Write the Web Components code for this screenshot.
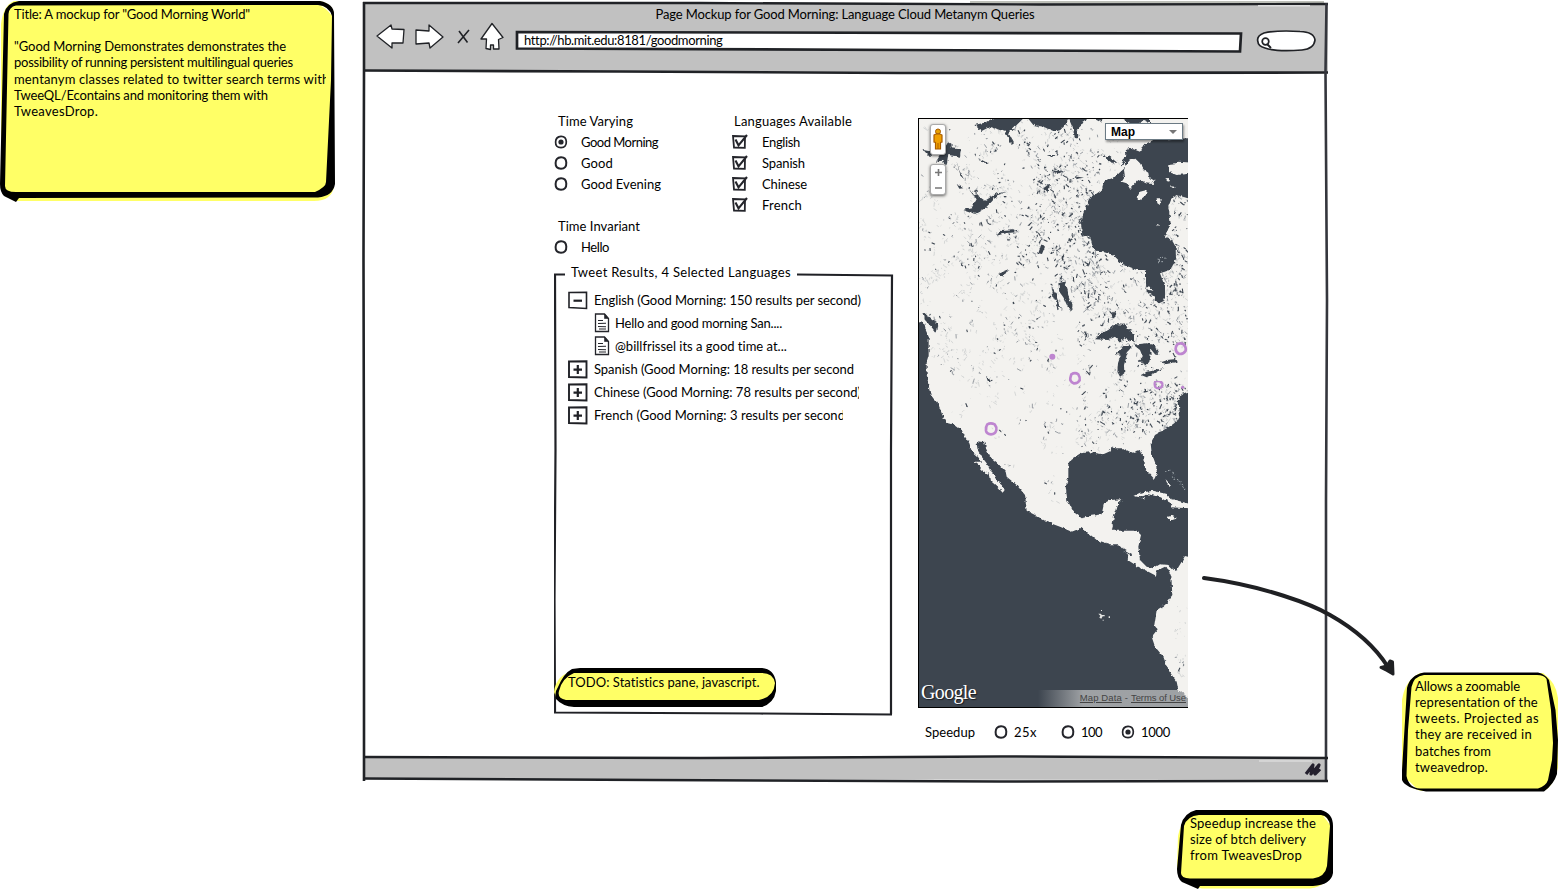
<!DOCTYPE html>
<html lang="en">
<head>
<meta charset="utf-8">
<title>Good Morning World mockup</title>
<style>
html,body{margin:0;height:100%;background:#fff;overflow:hidden}
body{font:13px/16.15px Lato,"Noto Sans",sans-serif;color:#000}
</style>
</head>
<body>
<mock-canvas>
  <browser-window style="left:362px;top:0">
    <ink-text slot="title" w="379">Page Mockup for Good Morning: Language Cloud Metanym Queries</ink-text>
    <ink-text slot="url" w="198">http://hb.mit.edu:8181/goodmorning</ink-text>
    <section-panel></section-panel>
    <map-panel></map-panel>
  </browser-window>
  <sticky-note kind="title" style="left:0;top:0;width:336px;height:203px;--pad:6px 9px 0 14px">
    <ink-text w="236">Title: A mockup for "Good Morning World"</ink-text>
    <ink-text> </ink-text>
    <ink-text w="272">"Good Morning Demonstrates demonstrates the</ink-text>
    <ink-text w="279">possibility of running persistent multilingual queries</ink-text>
    <ink-text w="315" clip="312">mentanym classes related to twitter search terms with</ink-text>
    <ink-text w="254">TweeQL/Econtains and monitoring them with</ink-text>
    <ink-text w="84">TweavesDrop.</ink-text>
  </sticky-note>
  <sticky-note kind="todo" style="left:554px;top:668px;width:224px;height:40px;--pad:6px 0 0 14px">
    <ink-text w="192">TODO: Statistics pane, javascript.</ink-text>
  </sticky-note>
  <sticky-note kind="zoom" style="left:1400px;top:670px;width:158px;height:123px;--pad:8px 0 0 15px">
    <ink-text w="105">Allows a zoomable</ink-text>
    <ink-text w="123">representation of the</ink-text>
    <ink-text w="124">tweets. Projected as</ink-text>
    <ink-text w="117">they are received in</ink-text>
    <ink-text w="76">batches from</ink-text>
    <ink-text w="73">tweavedrop.</ink-text>
  </sticky-note>
  <sticky-note kind="speed" style="left:1176px;top:808px;width:158px;height:81px;--pad:7px 0 0 14px">
    <ink-text w="126">Speedup increase the</ink-text>
    <ink-text w="116">size of btch delivery</ink-text>
    <ink-text w="112">from TweavesDrop</ink-text>
  </sticky-note>
  <ink-arrow style="left:1195px;top:570px"></ink-arrow>
</mock-canvas>

<script>
const make = (name, html) => customElements.define(name, class extends HTMLElement {
  constructor(){
    super();
    this.attachShadow({mode:'open'}).innerHTML = html instanceof Function ? html(this) : html;
  }
});

make('mock-canvas', `<style>:host{display:block;position:relative;width:1558px;height:889px;overflow:hidden}</style><slot></slot>`);

/* Sticky notes: a yellow blob under an uneven marker outline */
const notes = {
  title:`<path fill="#ff6" d="M14 1H320Q334 4 334 16V186Q332 201 314 201H16Q1 196 1 186V24Q3 6 14 1Z"/>
    <path fill="#fff" d="M318 5Q331 7 332 16Q326 7 318 5Z"/>
    <path fill-rule="evenodd" d="M19 1L320 1Q334 4 334 14L335 184Q333 196 318 197.500L19 198L16 202L4 196Q0 192 0 184L4 14Q6 3 19 1ZM16 5.500L318 5Q329 6 332 16L331 80L326 182Q326 187 315 192L16 192Q5 192 5 186L8.500 14Q9 7 16 5.500Z"/>`,
  todo:`<path fill="#ff6" d="M22 2H210Q222 6 222 17Q222 36 206 37H16Q2 34 0 24Q2 6 22 2Z"/>
    <path fill="#fff" d="M211 4Q220 5 221 13Q217 6 211 4Z"/>
    <path fill-rule="evenodd" d="M26 0H208Q220 1 222 14V23Q220 35 208 39H20Q8 38 2 31Q0 25 4 19Q10 5 18 1ZM24 5H206Q219 4 221 15Q220 29 205 32H12Q3 30 5 23Q8 10 20 5Z"/>`,
  zoom:`<path fill="#ff6" d="M20 3H143Q156 12 158 28V98Q152 120 142 121H22Q4 118 2 100L2 30Q5 10 20 3Z"/>
    <path fill="#fff" d="M7 112Q10 118 16 118L9 111Z"/>
    <path fill-rule="evenodd" d="M24 2.500H138Q145 4 149 10L155.500 40L158 70L157 104Q154 114 144 121.500L26 121.500Q5 118 2 110V100L7 18Q10 5 24 2.500ZM24 5Q14 6 11.500 17L8 60L6.500 106Q9 118 20 118.500H138Q146 116 148 110L152 90L153 73L151 40L146.500 9Q144 5 137 5Z"/>`,
  speed:`<path fill="#ff6" d="M20 3H143Q155 8 156 20V62Q152 78 134 80.500H26Q3 76 1 58L2 28Q6 8 20 3Z"/>
    <path fill="#fff" d="M147 8Q153 10 154 17Q150 11 147 8Z"/>
    <path fill-rule="evenodd" d="M20 2H145Q157 5 157 18V65Q155 77 137 78H24L22 81L6 74Q1 70 1 61L5 17Q8 5 20 2ZM23 7H145Q153 8 154 18L151 58Q149 69 137 70.500H14Q5 70 5 65L8 18Q11 8 23 7Z"/>`
};
make('sticky-note', el => `<style>
  :host{display:block;position:absolute;box-sizing:border-box}
  svg{position:absolute;inset:0;width:100%;height:100%;overflow:visible}
  div{position:relative;display:flex;flex-direction:column;align-items:flex-start;padding:var(--pad)}
  </style><svg>${notes[el.getAttribute('kind')]}</svg><div><slot></slot></div>`);

make('ink-arrow', `<style>:host{display:block;position:absolute;width:205px;height:110px}</style>
  <svg width="205" height="110" fill="none" stroke="#1f2023"><path d="M9 8C70 16 118 35 135 45Q174 67 193 97" stroke-width="4" stroke-linecap="round"/>
  <path d="M186 97.500L192 96L195 91L197.500 92L198 104L192 100.500Z" fill="#1f2023" stroke-width="3" stroke-linejoin="round"/></svg>`);

make('browser-window', `<style>
  :host{position:absolute;isolation:isolate;display:grid;grid-template-rows:73px 1fr 25px;width:967px;height:783px}
  header{display:flex;flex-direction:column;align-items:center;padding-top:6px}
  ::slotted([slot=title]){margin-left:-1px}
  .bar{display:flex;align-self:stretch;align-items:center;height:30px;padding-top:2px}
  .url{margin-left:162px;padding-top:2px}
  main{display:flex;gap:26px;padding:38px 0 0 192px}
  svg{position:absolute;inset:0;z-index:-1}
  </style>
  <svg width="967" height="783" viewBox="362 0 967 783" fill="none" stroke="#202226">
    <path d="M364 3L700 2L1328 4V72L900 72L364 70Z" fill="#c1c1c1" stroke="none"/>
    <path d="M364 758H1327V780L364 779Z" fill="#c1c1c1" stroke="none"/>
    <path d="M970 1H1324V3H970Z" fill="#bdbfb8" stroke="none"/>
    <path d="M363 3L700 3L1040 4.500L1328 4" stroke-width="2.300"/>
    <path d="M364 2V71L363.500 260L364 500V781" stroke-width="2.600"/>
    <path d="M363 70.500L620 71.500L900 73L1328 72.500" stroke-width="2.700"/>
    <path d="M1326.500 3L1325.500 72L1327 300L1326 500L1326 781" stroke="#34363d" stroke-width="2.600"/>
    <path d="M363 757L700 758L1000 756.500L1328 758" stroke-width="2.500"/>
    <path d="M363 778.500L650 780L1000 781.500L1328 781" stroke-width="2.500"/>
    <path d="M1258 5.800H1310" stroke="#f8f8f8"/><path d="M1259 761H1312" stroke="#e8e8e8"/>
    <g fill="#fff" stroke-width="1.300" stroke-linejoin="round">
      <path d="M377 36L391 25L392 29L404 29.500L403 43H392V48Z"/>
      <path d="M416 30L429 31V25L443 37L430 48L429 43L416 44Z"/>
      <path d="M492 23.500L503 37.500L498.500 39.500L499 49L493.500 49V45H490.500V49.500L486 48.500L486.500 39H481Z"/>
    </g>
    <path d="M458 43L469 30M459 31L467.500 42.500" stroke-width="1.600"/>
    <path d="M517 32L1241 33.500L1240 51.500L900 50L517 48.500Z" fill="#fff" stroke-width="2.700"/>
    <path d="M1258 42Q1256 36 1264 33Q1278 30 1300 31.500Q1314 32 1315 40Q1314 49 1302 50Q1276 52 1265 48Q1258 46 1258 42Z" fill="#fff" stroke-width="1.700"/>
    <circle cx="1265.500" cy="41.500" r="3.300" stroke-width="1.700"/><path d="M1267.500 44.500L1271 48" stroke-width="1.900"/>
    <path d="M1306 774L1313 765L1311 774L1319 765L1315 774L1320 769" stroke="#24202e" stroke-width="3.200" stroke-linejoin="round"/>
  </svg>
  <header><slot name="title"></slot><div class="bar"><div class="url"><slot name="url"></slot></div></div></header>
  <main><slot></slot></main>
  <footer></footer>`);

make('ink-radio', el => `<style>:host{display:flex;align-items:center;height:21px}svg{flex:none;margin:-2px var(--gap,13px) 0 0}</style>
  <svg width="14" height="14" fill="none" stroke="#24252b"><path d="M7 1.300Q12 1.200 12.300 6.500Q12.600 12.500 7 12.700Q1.400 12.700 1.600 7Q1.700 1.700 7 1.300Z" stroke-width="${el.hasAttribute('on')?1.7:2}"/>${el.hasAttribute('on')?'<circle cx="7" cy="7" r="2.600" fill="#24252b" stroke="none"/>':''}</svg><slot></slot>`);

make('ink-check', `<style>:host{display:flex;align-items:center;height:21px}svg{flex:none;margin:-2px 13px 0 -1px}</style>
  <svg width="18" height="17" fill="none" stroke="#24252b"><path d="M2 3L14 3.300L13.800 14.800L3 14.500Z" stroke-width="1.800"/><path d="M4.500 6.500L7.500 12.300L16 2" stroke-width="2.100"/></svg><slot></slot>`);

make('tree-row', el => {
  const k = el.getAttribute('kind');
  const icon = k === 'doc'
   ? `<svg width="16" height="20" fill="none" stroke="#24252b"><path d="M1.500 1H10.500L14.500 5.500V18.500L1.500 18.500Z" stroke-width="1.300"/><path d="M10.500 1V5.500H14.500Z" fill="#24252b" stroke-width=".6"/><path d="M4 7.500H9M4 10.500L12 10.200M4 13.500L12 13.700M5 16H12" stroke-width="1.100"/></svg>`
   : `<svg width="20" height="19" fill="none" stroke="#202126"><path d="M1 1.500L18.500 1.200V17.500L1 ${k==='plus'?17:16.5}Z" stroke-width="${k==='plus'?1.9:1.6}"/><path d="M5.500 9.700H14${k==='plus'?'M9.800 5V14':''}" stroke-width="2.200"/></svg>`;
  return `<style>:host{display:flex;align-items:center;height:23px;padding-left:${k==='doc'?26.5:0}px;gap:${k==='doc'?5:6.5}px}svg{flex:none;margin-top:-1px}</style>${icon}<slot></slot>`;
});

make('section-panel', `<style>
  :host{display:flex;flex-direction:column;width:338px}
  .opts{display:grid;grid-template-columns:178px 1fr}
  .col{display:flex;flex-direction:column}
  h4{margin:0;font-weight:normal;display:flex;align-items:center;height:21px;padding-left:4px}
  .col:last-child h4{padding-left:2px}
  .gap{height:21px}
  .results{position:relative;isolation:isolate;height:457px;margin-top:4px}
  .results>svg{position:absolute;left:0;top:0;z-index:-1}
  .legend{display:flex;align-items:center;padding-left:17px;height:16px;padding-top:2px}
  .tree{padding:9px 0 0 13.500px;display:flex;flex-direction:column}
  </style>
  <div class="opts"><div class="col">
    <h4><ink-text w="75">Time Varying</ink-text></h4>
    <ink-radio on><ink-text w="77">Good Morning</ink-text></ink-radio>
    <ink-radio><ink-text w="32">Good</ink-text></ink-radio>
    <ink-radio><ink-text w="80">Good Evening</ink-text></ink-radio>
    <div class="gap"></div>
    <h4><ink-text w="82">Time Invariant</ink-text></h4>
    <ink-radio><ink-text w="28">Hello</ink-text></ink-radio>
  </div><div class="col">
    <h4><ink-text w="118">Languages Available</ink-text></h4>
    <ink-check><ink-text w="38">English</ink-text></ink-check>
    <ink-check><ink-text w="43">Spanish</ink-text></ink-check>
    <ink-check><ink-text w="45">Chinese</ink-text></ink-check>
    <ink-check><ink-text w="40">French</ink-text></ink-check>
  </div></div>
  <div class="results">
    <svg width="340" height="457" viewBox="554 262 340 457" fill="none" stroke="#202126" stroke-width="2.200"><path d="M565 274.500H555L555.500 450L554.500 600L555 712.500L760 713.500L892 714.500" /><path d="M797 274.500L892 275.500L891 450L891 714"/></svg>
    <div class="legend"><ink-text w="220">Tweet Results, 4 Selected Languages</ink-text></div>
    <div class="tree">
      <tree-row kind="minus"><ink-text w="267">English (Good Morning: 150 results per second)</ink-text></tree-row>
      <tree-row kind="doc"><ink-text w="167">Hello and good morning San....</ink-text></tree-row>
      <tree-row kind="doc"><ink-text w="172">@billfrissel its a good time at...</ink-text></tree-row>
      <tree-row kind="plus"><ink-text w="260">Spanish (Good Morning: 18 results per second</ink-text></tree-row>
      <tree-row kind="plus"><ink-text w="267" clip="265">Chinese (Good Morning: 78 results per second)</ink-text></tree-row>
      <tree-row kind="plus"><ink-text w="251" clip="249">French (Good Morning: 3 results per second</ink-text></tree-row>
    </div>
  </div>`);

/* Small lakes: short jagged marks in clusters from a fixed seed, denser in the Canadian shield */
function lakes(){
  let s = 7; const r = () => (s = (s*16807)%2147483647)/2147483647;
  const zones = [
    [26,26,800,560,130,.25],[150,40,420,430,170,.5],[380,120,200,450,110,.7],[500,430,334,300,150,.6],
    [26,300,420,480,90,.2],[560,560,270,140,30,.5],[500,760,330,230,80,.5],[620,830,200,140,50,.65],
    [26,600,500,340,60,.2],[360,900,330,130,24,.3],[230,950,240,230,6,.3],[790,1420,44,280,8,.1],[770,250,64,330,30,.6]
  ];
  let dark='', mid='', pale='';
  for (const [x,y,w,h,n,d] of zones) for (let i=0;i<n;i++){
    const cx=x+r()*w, cy=y+r()*h, k=1+Math.floor(r()*7);
    for (let j=0;j<k;j++){
      const a=cx+(r()-.5)*36, b=cy+(r()-.5)*36, len=1.5+r()*r()*14, t=.4+r()*2.2;
      if (a<x||a>x+w||b<y||b>y+h) continue;
      const p=`M${a.toFixed(0)} ${b.toFixed(0)}l${(Math.cos(t)*len).toFixed(1)} ${(Math.sin(t)*len).toFixed(1)}${r()>.55?`l${(r()*9-3).toFixed(0)} ${(r()*5-2).toFixed(0)}`:''}`;
      const q=r();
      if (q<d*.45) dark+=p; else if (q<d) mid+=p; else pale+=p;
    }
  }
  return `<path d="${pale}" stroke="#cfd2d2" stroke-width="2.600"/><path d="${mid}" stroke="#8b9198" stroke-width="2.600"/><path d="${dark}" stroke="#3c4550" stroke-width="3.200"/>`;
}
make('map-view', `<style>
  :host{display:block;position:relative;width:270px;height:590px;overflow:hidden;background:#f3f2ef;font-family:"Liberation Sans",Arial,sans-serif}
  .m{position:absolute;inset:0}
  .edge{position:absolute;inset:0;border:solid #000;border-width:1px 0 1px 1px}
  .sel{position:absolute;left:187px;top:5px;width:78px;height:17px;box-sizing:border-box;background:#fff;border:1px solid #6b7a84;display:flex;align-items:center;justify-content:space-between;padding:1px 5px 0 5px;font-weight:bold;box-shadow:1px 2px 2px #0006}
  .sel i{border:4px solid transparent;border-top-color:#777;border-bottom:0}
  .ctl{position:absolute;left:12px;width:16px;height:31px;background:#fff;border:1px solid #aaa;border-radius:3px;box-sizing:border-box;box-shadow:0 1px 3px #0009}
  .ctl svg{display:block}
  .logo{position:absolute;left:3px;top:566px;color:#fff;text-shadow:1px 1px 1px #0009}
  .legal{position:absolute;right:0;bottom:1px;width:150px;height:17px;box-sizing:border-box;padding-right:2px;display:flex;justify-content:flex-end;align-items:center;gap:3px;color:#444;background:linear-gradient(90deg,#f3f2ef00,#f3f2ef88 45px);white-space:nowrap}
  .u{text-decoration:underline;text-underline-offset:1px}
  </style>
  <svg class="m" width="270" height="590">
  <filter id="rough" x="0" y="0" width="1" height="1"><feTurbulence type="fractalNoise" baseFrequency=".09" numOctaves="2" seed="4"/><feDisplacementMap in="SourceGraphic" scale="11" xChannelSelector="R" yChannelSelector="G"/></filter>
  <g transform="translate(-8 -8) scale(.33333)" fill="none">
  ${lakes()}
  <g filter="url(#rough)">
  <g fill="#3c4550">
  <path d="M0 635L42 638L47 660L56 680V735L50 755V790L56 830L62 855L85 882L95 910L108 938L135 945L155 960L165 980L178 1000L187 1025L205 1042L213 1055L192 1055L205 1065L215 1080L240 1095L243 1114L262 1130L278 1148L284 1140L275 1125L262 1115L255 1095L240 1080L230 1060L215 1040L203 1020L199 994L222 996L230 1020L240 1040L262 1058L287 1085L290 1100L320 1125L345 1155L350 1202L375 1215L410 1235L450 1250L485 1265L515 1253L530 1265L560 1290L600 1303L625 1303L640 1320L655 1335L653 1350L685 1370L705 1380L738 1397L740 1382L765 1370L775 1378L784 1400L787 1455L765 1485L740 1500L733 1545L743 1558L725 1580L735 1610L760 1640L775 1680L800 1715L805 1740L834 1762L860 1770V1820H0Z"/>
  <path d="M475 1060L485 1046L512 1030L540 1027L580 1033L600 1024L605 1015L640 1015L665 1028L690 1020L703 1040L705 1075L722 1095L733 1107L741 1090L738 1065L725 1030L722 1000L735 975L770 955L800 935L810 915L805 870L815 852L834 845H860V1340H834L825 1338L815 1355L797 1385L775 1365L750 1363L730 1375L710 1370L690 1350L685 1310L693 1275L680 1262L605 1262L612 1235L618 1205L625 1180L637 1168L600 1170L582 1180L575 1213L540 1218L515 1225L490 1205L472 1170L467 1130L475 1100Z"/>
  <path d="M655 112L642 145L647 172L610 205L585 210L575 240L540 265L520 310L513 340L517 375L540 378L550 420L578 425L610 435L640 465L680 480L708 480V520L710 545L730 558L745 580L765 565L765 530L750 490L780 480L798 450L797 410L785 390L765 380L782 340L775 290L785 265L800 255L834 265H860V85H834L730 90L700 105L690 125Z"/>
  <path d="M193 45L230 37L250 25L300 20H345L320 45L295 68L312 100L305 105L285 65L240 50L215 63Z"/>
  <path d="M350 20H480L460 55L430 63L400 50L370 45ZM475 20H530L515 45L500 60L505 80L495 85L488 50ZM540 20L570 35L585 20ZM625 20L680 50L700 30L720 40V20Z"/>
  <path d="M40 120L75 127L60 142ZM78 155L100 120L115 95L130 105L120 112L153 115L150 140L115 135L110 165L95 152Z"/>
  <path d="M140 155L150 185L162 208L152 198ZM140 222L160 235L148 236ZM160 300L187 290L200 268L178 240L205 258L225 272L260 250L290 246L262 256L245 275L225 295L195 312ZM258 378L275 360L310 358L325 366L285 370Z"/>
  <path d="M400 235L420 220L416 248ZM385 430L395 400L405 410L396 432ZM570 133L600 140L622 158L605 158L590 145ZM425 182L460 184L445 191ZM490 198L522 203L500 206ZM410 135H440L425 141ZM205 145L235 160L220 158ZM450 450L463 430L460 452ZM265 490L295 478L280 500Z"/>
  <path d="M445 520L463 515L472 535L476 560L488 600L475 595L460 562L448 545ZM425 530L438 555L450 590L460 602L445 590L430 560ZM480 570L488 585L484 605L478 598Z"/>
  <path d="M555 688L575 670L595 660L615 642L648 645L655 660L672 675V695L640 685L630 695L615 680L595 690Z"/>
  <path d="M618 732L640 708L668 708L655 722L648 745L642 765L643 790L630 800L622 785L624 760L632 735Z"/>
  <path d="M670 704L710 700L735 705L745 735L735 733L720 715L722 735L718 755L705 770L698 755L683 755L698 740L690 720Z"/>
  <path d="M693 795L710 785L735 780L763 774L745 783L710 802ZM750 757L770 750L798 747L803 755L770 762ZM605 607L617 607L616 625L607 625ZM735 570H765L748 580ZM40 605L60 625L82 642L78 668L62 648L45 630ZM228 798L240 806L242 818L233 812Z"/>
  </g>
  <g fill="#f3f2ef">
  <path d="M655 155L675 145L690 160L700 178L715 188L718 205L735 210L728 222L705 220L685 210L660 237L650 220L635 215L645 200L642 180ZM690 245L710 240L708 255L690 270L682 260ZM740 265L752 265L750 285L742 280ZM775 165L795 163L805 155L850 158V190L800 195L775 185ZM770 205L780 204L779 214L770 215ZM785 225L797 232L792 236L784 231ZM708 530L725 535L730 543L713 539ZM738 344L745 342L746 348Z"/>
  <path d="M670 1158L690 1148L730 1142L768 1152L785 1167L850 1185V1195L780 1192L787 1182L752 1162L715 1153L690 1162ZM768 1222L785 1217L803 1225L785 1231ZM697 1163L705 1165L702 1170ZM768 1108L783 1128L778 1130L770 1120Z"/></g>
  <path stroke="#bac0c3" stroke-width="2.500" stroke-dasharray="5 4" d="M765 1084L783 1080L793 1095M785 1100L805 1110L825 1140M743 450L755 440L768 445M745 455L760 455"/>
  <path stroke="#3c4550" stroke-width="5" d="M655 130L690 150M635 165L655 120M806 870V885M617 1205L610 1245M640 1320L665 1334"/>
  </g>
  <path fill="#e4e4e2" d="M565 1511H572L576 1515H584V1519H578L574 1526L568 1523L571 1517ZM596 1519H600V1524H596ZM573 1500H576V1503H573ZM578 1529H581V1532H578Z"/>
  <g stroke="#be85d0" stroke-width="8" stroke-linejoin="round"><path d="M232 943Q242 937 254 943Q261 952 259 960Q256 973 243 973Q230 972 228 962Q227 950 232 943Z"/><path d="M484 793Q495 786 505 793Q511 803 509 811Q503 821 491 820Q479 814 481 804Z"/><path d="M802 703Q812 697 821 703Q829 712 827 722Q820 733 808 732Q797 727 797 716Q797 709 802 703Z"/><path d="M734 817Q732 835 746 835Q759 833 757 820L750 816" stroke-width="7"/><path d="M732 815H757" stroke-width="4"/></g>
  <g fill="#be85d0"><circle cx="427" cy="740" r="9"/><circle cx="818" cy="832" r="5"/></g>
  </g></svg>
  <div class="ctl" style="top:6px"><svg width="14" height="29"><circle cx="7" cy="6.500" r="2.500" fill="#e8a000" stroke="#a85c00"/><path d="M3 10L5 9H9L11 10V17L9.500 17.500V24H4.500V17.500L3 17Z" fill="#f0a000" stroke="#a85c00" stroke-width="1.200"/><path d="M7 18V24" stroke="#a85c00"/></svg></div>
  <div class="ctl" style="top:46px"><svg width="14" height="29" stroke="#777" stroke-width="1.600"><path d="M4 7.500H11M7.500 4V11M4 23H11"/></svg></div>
  <div class="sel"><ink-text w="24" size="12">Map</ink-text><i></i></div>
  <div class="logo" style="font-family:'Liberation Serif',serif"><ink-text w="55" size="20">Google</ink-text></div>
  <div class="legal"><ink-text class="u" w="42" size="9.500">Map Data</ink-text><ink-text size="9.500">-</ink-text><ink-text class="u" w="55" size="9.500">Terms of Use</ink-text></div>
  <div class="edge"></div>`);

make('map-panel', `<style>
  :host{display:flex;flex-direction:column;width:270px;padding-top:7px}
  .speed{display:grid;grid-template-columns:69px 67px 60px auto;align-items:center;padding-left:7px;height:21px;margin-top:14px;--gap:6px}
  </style><map-view></map-view>
  <div class="speed"><ink-text w="50">Speedup</ink-text><ink-radio><ink-text w="23">25x</ink-text></ink-radio><ink-radio><ink-text w="21">100</ink-text></ink-radio><ink-radio on><ink-text w="29">1000</ink-text></ink-radio></div>`);

/* A run of lettering that is tracked to an exact width, optionally cut off */
customElements.define('ink-text', class extends HTMLElement {
  constructor(){
    super();
    this.attachShadow({mode:'open'}).innerHTML =
      `<style>:host{display:inline-block;white-space:pre;flex:none}</style><span><slot></slot></span>`;
  }
  connectedCallback(){
    const size = this.getAttribute('size'), w = +this.getAttribute('w'), clip = this.getAttribute('clip');
    if (size) this.style.fontSize = size + 'px';
    if (w) {
      const span = this.shadowRoot.querySelector('span');
      span.style.letterSpacing = (w - span.getBoundingClientRect().width) / this.textContent.length + 'px';
    }
    if (clip) { this.style.width = clip + 'px'; this.style.overflow = 'hidden'; }
  }
});
</script>
</body>
</html>
